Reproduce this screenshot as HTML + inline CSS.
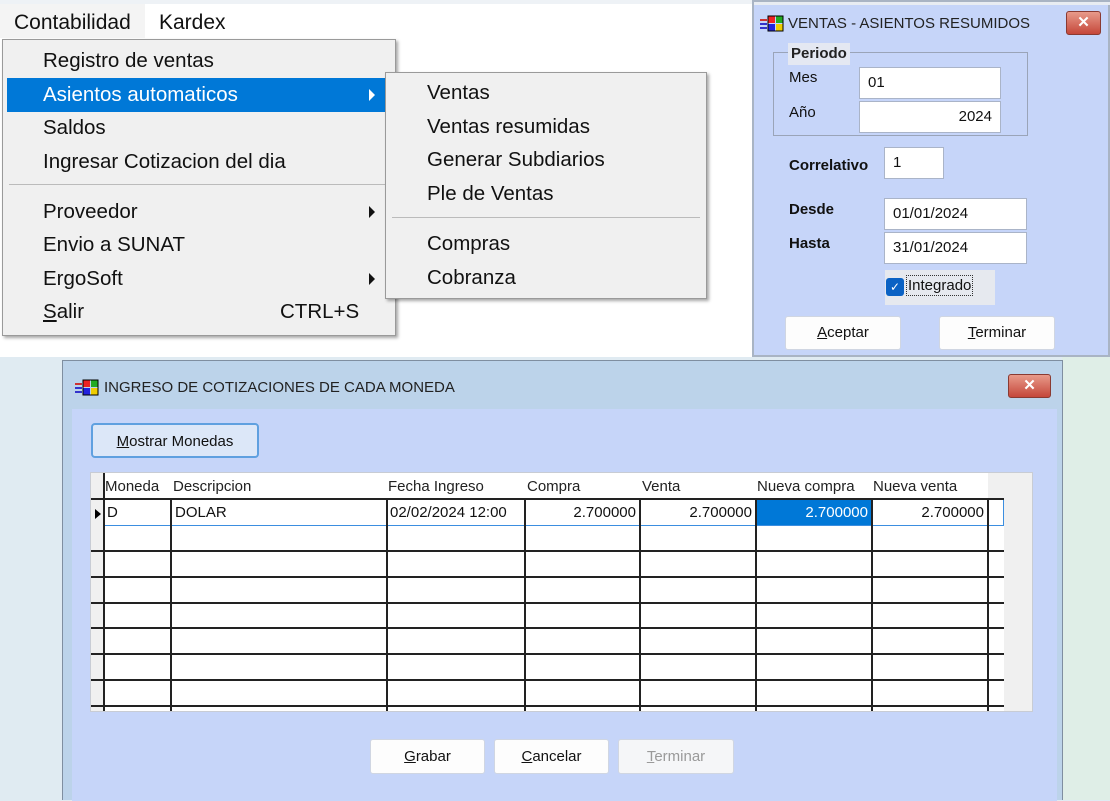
<!DOCTYPE html>
<html><head><meta charset="utf-8"><style>
*{box-sizing:border-box;margin:0;padding:0}
body{width:1110px;height:800px;position:relative;overflow:hidden;font-family:"Liberation Sans",sans-serif;background:#e0ebf2}
.a{position:absolute}
.mi{position:absolute;left:40px;font-size:20.5px;color:#111;line-height:20px}
.si{position:absolute;left:41px;font-size:20.5px;color:#111;line-height:20px}
.tb{position:absolute;background:#fff;border:1px solid #aab4c8;font-size:15px;padding:0 8px;line-height:29px;color:#111}
.lb{position:absolute;font-size:15px;color:#111}
.btn{position:absolute;background:#fdfdfd;border:1px solid #d0d6e2;border-radius:3px;font-size:15px;text-align:center;color:#111}
.gl{position:absolute;background:#222}
.hd{position:absolute;top:478px;font-size:15px;color:#222}
.cell{position:absolute;top:504px;font-size:15px;color:#111}
</style></head><body>
<div class="a" style="left:0;top:0;width:752px;height:357px;background:#fff"></div>
<div class="a" style="left:0;top:0;width:752px;height:4px;background:#eef2f6"></div>
<div class="a" style="left:0;top:4px;width:145px;height:34px;background:#f4f4f4"></div>
<div class="a" style="left:14px;top:11px;font-size:21px;color:#111">Contabilidad</div>
<div class="a" style="left:159px;top:11px;font-size:21px;color:#111">Kardex</div>
<div class="a" style="left:2px;top:39px;width:394px;height:297px;background:#f0f0f0;border:1px solid #9a9a9a;box-shadow:2px 2px 3px rgba(0,0,0,.35)">
 <div class="a" style="left:4px;top:38px;width:380px;height:34px;background:#0078d7"></div>
 <div class="mi" style="top:11px">Registro de ventas</div>
 <div class="mi" style="top:45px;color:#fff">Asientos automaticos</div>
 <div class="a" style="left:366px;top:49px;width:0;height:0;border-left:6px solid #fff;border-top:6px solid transparent;border-bottom:6px solid transparent"></div>
 <div class="mi" style="top:78px">Saldos</div>
 <div class="mi" style="top:112px">Ingresar Cotizacion del dia</div>
 <div class="a" style="left:6px;top:144px;width:378px;height:1px;background:#bbb"></div>
 <div class="mi" style="top:162px">Proveedor</div>
 <div class="a" style="left:366px;top:166px;border-left:6px solid #111;border-top:6px solid transparent;border-bottom:6px solid transparent"></div>
 <div class="mi" style="top:195px">Envio a SUNAT</div>
 <div class="mi" style="top:229px">ErgoSoft</div>
 <div class="a" style="left:366px;top:233px;border-left:6px solid #111;border-top:6px solid transparent;border-bottom:6px solid transparent"></div>
 <div class="mi" style="top:262px"><u>S</u>alir</div>
 <div class="mi" style="top:262px;left:277px">CTRL+S</div>
</div>
<div class="a" style="left:385px;top:72px;width:322px;height:227px;background:#f0f0f0;border:1px solid #9a9a9a;box-shadow:2px 2px 3px rgba(0,0,0,.35)">
 <div class="si" style="top:10px">Ventas</div>
 <div class="si" style="top:44px">Ventas resumidas</div>
 <div class="si" style="top:77px">Generar Subdiarios</div>
 <div class="si" style="top:111px">Ple de Ventas</div>
 <div class="a" style="left:6px;top:144px;width:308px;height:1px;background:#bbb"></div>
 <div class="si" style="top:161px">Compras</div>
 <div class="si" style="top:195px">Cobranza</div>
</div>
<div class="a" style="left:752px;top:0;width:358px;height:357px;background:#c6d5f9;border:2px solid #a9b4c4">
 <div class="a" style="left:0;top:0;width:356px;height:3px;background:#e8ecf2"></div>
 <svg class="a" style="left:6px;top:12px" width="24" height="20" viewBox="0 0 24 20"><rect x="0" y="5" width="7" height="2" fill="#c33"/><rect x="0" y="9" width="7" height="2" fill="#33c"/><rect x="0" y="13" width="7" height="2" fill="#33c"/><rect x="8" y="2" width="7" height="7" fill="#e22"/><rect x="16" y="2" width="7" height="7" fill="#2a2"/><rect x="8" y="10" width="7" height="7" fill="#22d"/><rect x="16" y="10" width="7" height="7" fill="#ec0"/><path d="M8 2h15v15H8z" fill="none" stroke="#000"/></svg>
 <div class="a" style="left:34px;top:13px;font-size:15px;color:#222">VENTAS - ASIENTOS RESUMIDOS</div>
 <div class="a" style="left:312px;top:9px;width:35px;height:24px;background:linear-gradient(#e89a8a,#c5473a);border:1px solid #8a3a32;border-radius:3px;color:#fff;font-weight:bold;font-size:15px;text-align:center;line-height:21px">✕</div>
 <div class="a" style="left:19px;top:50px;width:255px;height:84px;border:1px solid #9aa4b8"></div>
 <div class="a" style="left:34px;top:41px;padding:0 3px;background:#e4e8f2;font-size:15px;font-weight:bold;color:#222;line-height:22px">Periodo</div>
 <div class="lb" style="left:35px;top:67px">Mes</div>
 <div class="tb" style="left:105px;top:65px;width:142px;height:32px">01</div>
 <div class="lb" style="left:35px;top:102px">Año</div>
 <div class="tb" style="left:105px;top:99px;width:142px;height:32px;text-align:right">2024</div>
 <div class="lb" style="left:35px;top:155px;font-weight:bold">Correlativo</div>
 <div class="tb" style="left:130px;top:145px;width:60px;height:32px">1</div>
 <div class="lb" style="left:35px;top:199px;font-weight:bold">Desde</div>
 <div class="tb" style="left:130px;top:196px;width:143px;height:32px">01/01/2024</div>
 <div class="lb" style="left:35px;top:233px;font-weight:bold">Hasta</div>
 <div class="tb" style="left:130px;top:230px;width:143px;height:32px">31/01/2024</div>
 <div class="a" style="left:131px;top:268px;width:110px;height:35px;background:#e6e9ef"></div>
 <div class="a" style="left:132px;top:276px;width:18px;height:18px;background:#0b62c4;border-radius:3px;color:#fff;font-size:12px;text-align:center;line-height:18px">✓</div>
 <div class="a" style="left:152px;top:273px;border:1px dotted #333;font-size:15px;padding:1px 1px;color:#111">Integrado</div>
 <div class="btn" style="left:31px;top:314px;width:116px;height:34px;line-height:32px"><u>A</u>ceptar</div>
 <div class="btn" style="left:185px;top:314px;width:116px;height:34px;line-height:32px"><u>T</u>erminar</div>
</div>
<div class="a" style="left:1062px;top:357px;width:48px;height:443px;background:#dfeee7"></div>
<div class="a" style="left:62px;top:360px;width:1001px;height:440px;background:#bcd3ea;border:1px solid #7f8ea0;border-bottom:none">
 <svg class="a" style="left:12px;top:17px" width="24" height="20" viewBox="0 0 24 20"><rect x="0" y="5" width="7" height="2" fill="#c33"/><rect x="0" y="9" width="7" height="2" fill="#33c"/><rect x="0" y="13" width="7" height="2" fill="#33c"/><rect x="8" y="2" width="7" height="7" fill="#e22"/><rect x="16" y="2" width="7" height="7" fill="#2a2"/><rect x="8" y="10" width="7" height="7" fill="#22d"/><rect x="16" y="10" width="7" height="7" fill="#ec0"/><path d="M8 2h15v15H8z" fill="none" stroke="#000"/></svg>
 <div class="a" style="left:41px;top:18px;font-size:15px;color:#222">INGRESO DE COTIZACIONES DE CADA MONEDA</div>
 <div class="a" style="left:945px;top:13px;width:43px;height:24px;background:linear-gradient(#e89a8a,#c5473a);border:1px solid #8a3a32;border-radius:3px;color:#fff;font-weight:bold;font-size:15px;text-align:center;line-height:21px">✕</div>
 <div class="a" style="left:9px;top:48px;width:985px;height:392px;background:#c6d5f9"></div>
</div>
<div class="btn" style="left:91px;top:423px;width:168px;height:35px;line-height:33px;background:#dce7f8;border:2px solid #5fa0e0;border-radius:4px"><u>M</u>ostrar Monedas</div>
<div class="a" style="left:90px;top:472px;width:943px;height:240px;background:#f0f0f0;border:1px solid #c8ccd4"></div>
<div class="a" style="left:104px;top:473px;width:884px;height:26px;background:#fff"></div>
<div class="a" style="left:104px;top:499px;width:900px;height:212px;background:#fff"></div>
<div class="a" style="left:104px;top:499px;width:900px;height:27px;border:1px solid #3b8ee0"></div>
<div class="a" style="left:757px;top:500px;width:115px;height:25px;background:#0078d7"></div>
<div class="gl" style="left:91px;top:498px;width:913px;height:2px"></div>
<div class="gl" style="left:91px;top:550px;width:913px;height:2px"></div>
<div class="gl" style="left:91px;top:576px;width:913px;height:2px"></div>
<div class="gl" style="left:91px;top:602px;width:913px;height:2px"></div>
<div class="gl" style="left:91px;top:627px;width:913px;height:2px"></div>
<div class="gl" style="left:91px;top:653px;width:913px;height:2px"></div>
<div class="gl" style="left:91px;top:679px;width:913px;height:2px"></div>
<div class="gl" style="left:91px;top:705px;width:913px;height:2px"></div>
<div class="gl" style="left:103px;top:473px;width:2px;height:238px"></div>
<div class="gl" style="left:170px;top:499px;width:2px;height:212px"></div>
<div class="gl" style="left:386px;top:499px;width:2px;height:212px"></div>
<div class="gl" style="left:524px;top:499px;width:2px;height:212px"></div>
<div class="gl" style="left:639px;top:499px;width:2px;height:212px"></div>
<div class="gl" style="left:755px;top:499px;width:2px;height:212px"></div>
<div class="gl" style="left:871px;top:499px;width:2px;height:212px"></div>
<div class="gl" style="left:987px;top:499px;width:2px;height:212px"></div>
<div class="hd" style="left:105px">Moneda</div>
<div class="hd" style="left:173px">Descripcion</div>
<div class="hd" style="left:388px">Fecha Ingreso</div>
<div class="hd" style="left:527px">Compra</div>
<div class="hd" style="left:642px">Venta</div>
<div class="hd" style="left:757px">Nueva compra</div>
<div class="hd" style="left:873px">Nueva venta</div>
<div class="a" style="left:95px;top:509px;border-left:6px solid #000;border-top:5px solid transparent;border-bottom:5px solid transparent"></div>
<div class="cell" style="left:107px">D</div>
<div class="cell" style="left:175px">DOLAR</div>
<div class="cell" style="left:390px;width:134px;overflow:hidden;white-space:nowrap">02/02/2024 12:00</div>
<div class="cell" style="left:526px;width:110px;text-align:right">2.700000</div>
<div class="cell" style="left:641px;width:111px;text-align:right">2.700000</div>
<div class="cell" style="left:757px;width:111px;text-align:right;color:#fff">2.700000</div>
<div class="cell" style="left:873px;width:111px;text-align:right">2.700000</div>
<div class="btn" style="left:370px;top:739px;width:115px;height:35px;line-height:33px"><u>G</u>rabar</div>
<div class="btn" style="left:494px;top:739px;width:115px;height:35px;line-height:33px"><u>C</u>ancelar</div>
<div class="btn" style="left:618px;top:739px;width:116px;height:35px;line-height:33px;color:#9a9a9a;background:#f5f6f8"><u>T</u>erminar</div>
</body></html>
